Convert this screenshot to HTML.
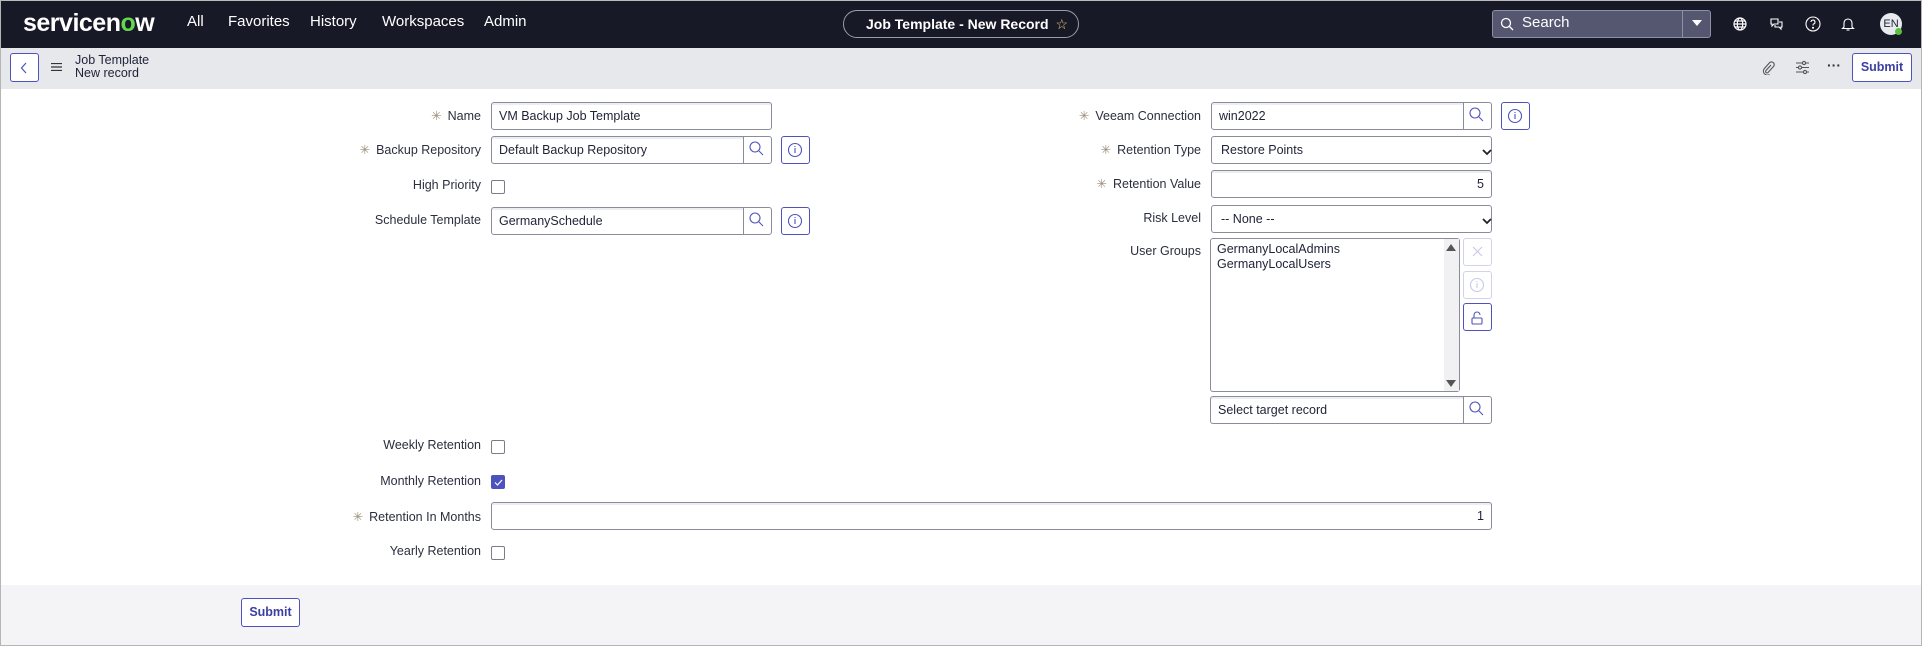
<!DOCTYPE html>
<html><head><meta charset="utf-8"><style>
*{box-sizing:border-box;margin:0;padding:0}
body{width:1922px;height:646px;position:relative;overflow:hidden;background:#fff;font-family:"Liberation Sans",sans-serif;color:#1f2237;font-size:12.5px}
.a{position:absolute}
.hdr{left:0;top:0;width:1922px;height:48px;background:#181926;border-top:1px solid #bbb}
.nav{color:#fff;font-size:15px;top:13px}
.sub{left:0;top:48px;width:1922px;height:41px;background:#e6e8eb}
.lbl{text-align:right;font-size:12.5px;color:#2b2e3e;white-space:nowrap}
.req{color:#9a8f7a;margin-right:6px}
.inp{border:1px solid #8a8d99;border-radius:3px;background:#fff;height:28px;font-size:12.5px;padding:6px 7px;box-shadow:inset 0 2px 0 #eceef1;white-space:nowrap}
.sbtn{border:1px solid #8a8d99;border-radius:0 3px 3px 0;background:#fff;width:29px;height:28px}
.ibtn{border:1px solid #4f52bd;border-radius:3px;background:#fff;width:29px;height:28px}
.cb{width:14px;height:14px;border:1px solid #7a7d88;border-radius:2px;background:#fff}
.sel{border:1px solid #8a8d99;border-radius:3px;background:#fff;height:28px;padding:6px 9px;font-size:12.5px}
</style></head><body>
<div class="a hdr"></div>
<div class="a" style="left:23px;top:9px;color:#fff;font-size:25px;font-weight:bold;letter-spacing:-0.5px">servicen<span style="color:#62d84e">o</span>w</div>
<div class="a nav" style="left:187px">All</div>
<div class="a nav" style="left:228px">Favorites</div>
<div class="a nav" style="left:310px">History</div>
<div class="a nav" style="left:382px">Workspaces</div>
<div class="a nav" style="left:484px">Admin</div>
<div class="a" style="left:843px;top:10px;width:236px;height:28px;border:1px solid #9a9cab;border-radius:14px;color:#fff;font-weight:bold;font-size:14px;padding:5px 0 0 22px;white-space:nowrap">Job Template - New Record <span style="color:#e8c878;font-weight:normal;margin-left:3px">☆</span></div>
<div class="a" style="left:1492px;top:10px;width:219px;height:28px;background:#555770;border:1px solid #8d8fa3;border-radius:3px"></div>
<div class="a" style="left:1682px;top:10px;width:1px;height:28px;background:#8d8fa3"></div>
<svg class="a" style="left:1500px;top:17px" width="14" height="14" viewBox="0 0 14 14"><circle cx="6" cy="6" r="4.5" fill="none" stroke="#fff" stroke-width="1.3"/><path d="M9.5 9.5l3.5 3.5" stroke="#fff" stroke-width="1.3"/></svg>
<div class="a" style="left:1522px;top:14px;color:#fff;font-size:15px">Search</div>
<svg class="a" style="left:1692px;top:20px" width="10" height="7"><path d="M0 0h10L5 6z" fill="#fff"/></svg>
<svg class="a" style="left:1733px;top:17px" width="14" height="14" viewBox="0 0 14 14" fill="none" stroke="#fff" stroke-width="1.2"><circle cx="7" cy="7" r="6"/><ellipse cx="7" cy="7" rx="2.7" ry="6"/><path d="M1 7h12M2 4h10M2 10h10"/></svg>
<svg class="a" style="left:1769px;top:17px" width="15" height="14" viewBox="0 0 15 14" fill="none" stroke="#fff" stroke-width="1.1"><path d="M2 2h7v5H5l-2 2V7H2z"/><path d="M10 5h3v5h-1v2l-2-2H6V8"/></svg>
<svg class="a" style="left:1805px;top:16px" width="16" height="16" viewBox="0 0 16 16" fill="none" stroke="#fff" stroke-width="1.1"><circle cx="8" cy="8" r="7"/><path d="M6 6a2 2 0 1 1 2.5 2c-.5.2-.5.6-.5 1.5"/><circle cx="8" cy="11.8" r=".5" fill="#fff"/></svg>
<svg class="a" style="left:1841px;top:16px" width="14" height="16" viewBox="0 0 14 16" fill="none" stroke="#fff" stroke-width="1.1"><path d="M3 11V7a4 4 0 0 1 8 0v4l1.5 1.5h-11z"/><path d="M5.5 14h3"/></svg>
<div class="a" style="left:1880px;top:13px;width:22px;height:22px;border-radius:50%;background:#e9eaee;color:#1f2237;font-size:11px;text-align:center;line-height:22px">EN</div>
<div class="a" style="left:1895px;top:28px;width:7px;height:7px;border-radius:50%;background:#5bbf3f"></div>

<div class="a sub"></div>
<div class="a" style="left:10px;top:53px;width:29px;height:29px;border:1px solid #4f52bd;border-radius:3px;background:#fff"></div>
<svg class="a" style="left:20px;top:62px" width="8" height="12"><path d="M6 1L1.5 6 6 11" fill="none" stroke="#4f52bd" stroke-width="1.2"/></svg>
<svg class="a" style="left:51px;top:63px" width="11" height="8"><path d="M0 .5h11M0 4h11M0 7.5h11" stroke="#333" stroke-width="1.2"/></svg>
<div class="a" style="left:75px;top:54px;font-size:12.5px;line-height:13px;color:#1f2237">Job Template<br>New record</div>
<svg class="a" style="left:1761px;top:61px" width="14" height="14" viewBox="0 0 14 14" fill="none" stroke="#555" stroke-width="1.1"><path d="M10 4L5 9.5a1.3 1.3 0 0 0 2 2l5.5-6a2.6 2.6 0 0 0-4-3.7L3 8a4 4 0 0 0 5.5 5.5"/></svg>
<svg class="a" style="left:1795px;top:60px" width="15" height="15" viewBox="0 0 15 15" fill="none" stroke="#555" stroke-width="1.1"><path d="M1 3h13M1 7.5h13M1 12h13"/><circle cx="9" cy="3" r="1.6" fill="#e6e8eb"/><circle cx="5" cy="7.5" r="1.6" fill="#e6e8eb"/><circle cx="10" cy="12" r="1.6" fill="#e6e8eb"/></svg>
<div class="a" style="left:1827px;top:57px;font-size:14px;color:#333;font-weight:bold">···</div>
<div class="a" style="left:1852px;top:53px;width:60px;height:29px;border:1px solid #4f52bd;border-radius:3px;background:#fff;color:#3b3fa3;font-weight:bold;font-size:12.5px;text-align:center;line-height:27px">Submit</div>

<div class="a lbl" style="right:1441px;top:108px"><span class="req">✳</span>Name</div>
<div class="a inp" style="left:491px;top:102px;width:281px">VM Backup Job Template</div>
<div class="a lbl" style="right:1441px;top:142px"><span class="req">✳</span>Backup Repository</div>
<div class="a inp" style="left:491px;top:136px;width:253px;border-radius:3px 0 0 3px">Default Backup Repository</div>
<div class="a sbtn" style="left:743px;top:136px"></div>
<div class="a ibtn" style="left:781px;top:136px"></div>
<div class="a lbl" style="right:1441px;top:178px">High Priority</div>
<div class="a cb" style="left:491px;top:180px"></div>
<div class="a lbl" style="right:1441px;top:213px">Schedule Template</div>
<div class="a inp" style="left:491px;top:207px;width:253px;border-radius:3px 0 0 3px">GermanySchedule</div>
<div class="a sbtn" style="left:743px;top:207px"></div>
<div class="a ibtn" style="left:781px;top:207px"></div>

<div class="a lbl" style="right:721px;top:108px"><span class="req">✳</span>Veeam Connection</div>
<div class="a inp" style="left:1211px;top:102px;width:253px;border-radius:3px 0 0 3px">win2022</div>
<div class="a sbtn" style="left:1463px;top:102px"></div>
<div class="a ibtn" style="left:1501px;top:102px"></div>
<div class="a lbl" style="right:721px;top:142px"><span class="req">✳</span>Retention Type</div>
<div class="a sel" style="left:1211px;top:136px;width:281px">Restore Points</div>
<div class="a lbl" style="right:721px;top:176px"><span class="req">✳</span>Retention Value</div>
<div class="a inp" style="left:1211px;top:170px;width:281px;text-align:right">5</div>
<div class="a lbl" style="right:721px;top:211px">Risk Level</div>
<div class="a sel" style="left:1211px;top:205px;width:281px">-- None --</div>
<div class="a lbl" style="right:721px;top:244px">User Groups</div>
<div class="a" style="left:1210px;top:238px;width:250px;height:154px;border:1px solid #8a8d99;border-radius:3px;background:#fff;padding:3px 6px;line-height:15px;font-size:12.5px">GermanyLocalAdmins<br>GermanyLocalUsers</div>
<div class="a" style="left:1444px;top:239px;width:15px;height:152px;background:#f1f1f3"></div>
<svg class="a" style="left:1446px;top:244px" width="10" height="8"><path d="M5 0l5 7H0z" fill="#555"/></svg>
<svg class="a" style="left:1446px;top:380px" width="10" height="8"><path d="M0 0h10L5 7z" fill="#555"/></svg>
<div class="a" style="left:1463px;top:238px;width:29px;height:28px;border:1px solid #d2d3eb;border-radius:3px"></div>
<div class="a" style="left:1463px;top:271px;width:29px;height:28px;border:1px solid #d2d3eb;border-radius:3px"></div>
<div class="a ibtn" style="left:1463px;top:303px"></div>
<div class="a inp" style="left:1210px;top:396px;width:254px;border-radius:3px 0 0 3px">Select target record</div>
<div class="a sbtn" style="left:1463px;top:396px"></div>

<svg class="a" style="left:0;top:0" width="1922" height="646" fill="none">
<g stroke="#4f52bd" stroke-width="1.1">
<circle cx="755" cy="147" r="5"/><path d="M759 151l4 4"/>
<circle cx="755" cy="218" r="5"/><path d="M759 222l4 4"/>
<circle cx="1475" cy="113" r="5"/><path d="M1479 117l4 4"/>
<circle cx="1475" cy="407" r="5"/><path d="M1479 411l4 4"/>
<circle cx="795" cy="150" r="6.5"/><path d="M795 148v5M795 146v1"/>
<circle cx="795" cy="221" r="6.5"/><path d="M795 219v5M795 217v1"/>
<circle cx="1515" cy="116" r="6.5"/><path d="M1515 114v5M1515 112v1"/>
<rect x="1472" y="318" width="10" height="6" rx="1"/><path d="M1474 318v-3a3 3 0 0 1 6 0"/>
</g>
<g stroke="#c8c9e6" stroke-width="1.1">
<path d="M1473 247l9 9M1482 247l-9 9"/>
<circle cx="1477" cy="285" r="6.5"/><path d="M1477 283v5M1477 281v1"/>
</g>
<path d="M1483 150l4 4 4-4M1483 219l4 4 4-4" stroke="#222" stroke-width="1.8"/>
</svg>

<div class="a lbl" style="right:1441px;top:438px">Weekly Retention</div>
<div class="a cb" style="left:491px;top:440px"></div>
<div class="a lbl" style="right:1441px;top:474px">Monthly Retention</div>
<div class="a cb" style="left:491px;top:475px;background:#4f52bd;border-color:#4f52bd"></div>
<svg class="a" style="left:494px;top:479px" width="9" height="7"><path d="M1 3.5l2.5 2.5L8 1" stroke="#fff" stroke-width="1.2" fill="none"/></svg>
<div class="a lbl" style="right:1441px;top:509px"><span class="req">✳</span>Retention In Months</div>
<div class="a inp" style="left:491px;top:502px;width:1001px;text-align:right">1</div>
<div class="a lbl" style="right:1441px;top:544px">Yearly Retention</div>
<div class="a cb" style="left:491px;top:546px"></div>

<div class="a" style="left:0;top:585px;width:1922px;height:60px;background:#f4f4f6"></div>
<div class="a" style="left:241px;top:598px;width:59px;height:29px;border:1px solid #4f52bd;border-radius:3px;background:#fff;color:#3b3fa3;font-weight:bold;font-size:12.5px;text-align:center;line-height:27px">Submit</div>
<div class="a" style="left:0;top:0;width:1922px;height:646px;border:1px solid #b5b5b5;border-top:none"></div>
</body></html>
